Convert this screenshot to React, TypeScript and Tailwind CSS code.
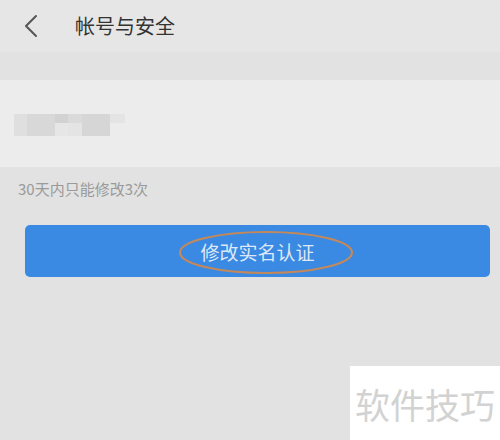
export default function App() {
  return (
    <div
      className="relative w-[500px] h-[440px] overflow-hidden bg-[#e2e2e2]"
      style={{ fontFamily: '"Noto Sans CJK SC", "Noto Sans", sans-serif' }}
    >
      {/* Header */}
      <div className="h-[52px] bg-[#e6e6e6] flex items-center">
        <svg className="ml-[22px] w-[18px] h-[24px]" viewBox="0 0 18 24" fill="none">
          <path d="M14 2 L4 12 L14 22" stroke="#555" strokeWidth="2" strokeLinecap="round" strokeLinejoin="round" />
        </svg>
        <span className="ml-[35px] text-[20px] leading-none text-[#333]">帐号与安全</span>
      </div>

      <div className="h-[28px]" />

      {/* Name card */}
      <div className="h-[87px] bg-[#ececec] flex items-center pl-[14px]">
        <div className="flex h-[22px] mt-[2px]">
          <div className="w-[13px] bg-[#dfdfdf]" />
          <div className="w-[28px] bg-[#d8d8d8]" />
          <div className="w-[13px] flex flex-col">
            <div className="h-[9px] bg-[#d2d2d2]" />
            <div className="flex-1 bg-[#e6e6e6]" />
          </div>
          <div className="w-[14px] flex flex-col">
            <div className="h-[9px] bg-[#dadada]" />
            <div className="flex-1 bg-[#e4e4e4]" />
          </div>
          <div className="w-[28px] bg-[#d6d6d6]" />
          <div className="w-[15px] flex flex-col">
            <div className="h-[9px] bg-[#e4e4e4]" />
          </div>
        </div>
      </div>

      <p className="mt-[12px] pl-[18px] text-[15px] leading-[20px] text-[#9a9a9a]">30天内只能修改3次</p>

      {/* Button */}
      <div className="mt-[26px] px-[25px] pr-[10px]">
        <div className="relative h-[52px] rounded-[5px] bg-[#3a89e3] flex items-center justify-center">
          <span className="text-[19px] leading-none text-[#dde8f6]">修改实名认证</span>
          <svg className="absolute left-[153px] top-[5px]" width="176" height="45" viewBox="0 0 176 45" fill="none">
            <ellipse cx="88" cy="22.5" rx="86" ry="20.5" stroke="#c4895a" strokeWidth="2.2" />
          </svg>
        </div>
      </div>

      {/* Watermark */}
      <div className="absolute left-[350px] top-[366px] w-[150px] h-[74px] bg-white flex items-center justify-center">
        <span className="text-[35px] leading-none text-[#d2d2d2] tracking-[0px]">软件技巧</span>
      </div>
    </div>
  );
}
